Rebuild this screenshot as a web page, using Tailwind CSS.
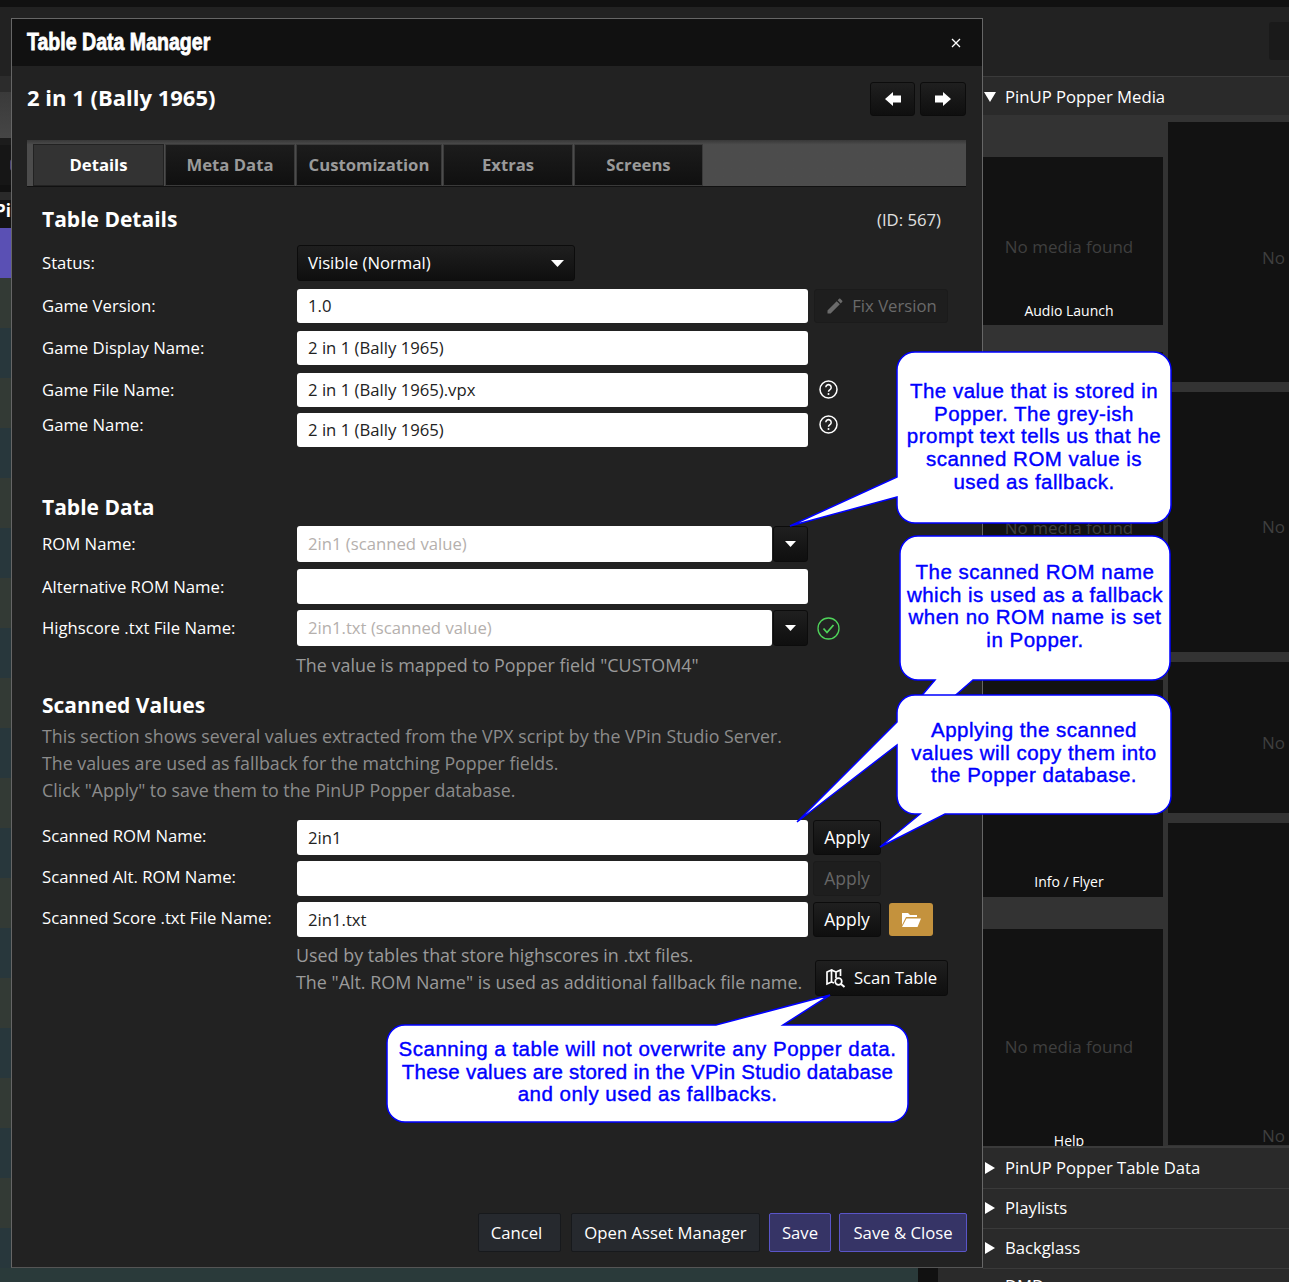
<!DOCTYPE html>
<html lang="en">
<head>
  <meta charset="UTF-8" />
  <title>Table Data Manager</title>
  <script src="https://cdn.jsdelivr.net/npm/@tailwindcss/browser@4"></script>
</head>
<body class="bg-[#222222]">
<div class="relative w-[1289px] h-[1282px] overflow-hidden bg-[#222222] text-white font-['Open_Sans',sans-serif] text-[16.7px]">

  <!-- app behind the dialog -->
  <div class="flex h-full">
    <!-- left: only a thin strip stays visible -->
    <div class="w-[983px] flex flex-col">
      <div class="h-[7px] shrink-0 bg-[#111111]"></div>
      <div class="h-[69px] shrink-0 bg-[#222222]"></div>
      <div class="h-[16px] shrink-0 bg-[#2c2c2c]"></div>
      <div class="h-[46px] shrink-0 bg-gradient-to-b from-[#3a3a3a] to-[#464646]"></div>
      <div class="h-[7px] shrink-0 bg-[#1c1c1c]"></div>
      <div class="h-[40px] shrink-0 bg-[#161616] relative">
        <div class="absolute left-[10px] top-[14px] w-[3px] h-[12px] rounded-l-full bg-[#4a4478]"></div>
      </div>
      <div class="h-[7px] shrink-0 bg-[#111111]"></div>
      <div class="h-[8px] shrink-0 bg-[#2a2a2a]"></div>
      <div class="h-[28px] shrink-0 bg-[#141414] font-bold text-[17px] leading-[22px] -ml-[5px] overflow-hidden">Pi</div>
      <div class="h-[50px] shrink-0 bg-[#5a50b4]"></div>
      <div class="flex-1 min-h-0 bg-[repeating-linear-gradient(#333a35_0,#333a35_50px,#28373c_50px,#28373c_100px)]"></div>
      <div class="h-[14px] shrink-0 flex">
        <div class="w-[918px] bg-[#2a3a3a]"></div>
        <div class="w-[20px] bg-[#111111]"></div>
        <div class="flex-1 bg-[#2a2a2a]"></div>
      </div>
    </div>

    <!-- right: media panel -->
    <div class="flex-1 flex flex-col min-w-0">
      <div class="h-[7px] shrink-0 bg-[#111111]"></div>
      <div class="h-[69px] shrink-0 bg-[#222222] flex justify-end pt-[15px]">
        <div class="w-[20px] h-[38px] bg-[#1a1a1a] rounded-l-[3px]"></div>
      </div>
      <div class="h-[39px] shrink-0 pt-[2px] bg-[#2a2a2a] border-t border-[#3a3a3a] flex items-center text-[16.7px]">
        <svg class="w-[12px] h-[10px] ml-[1px]" viewBox="0 0 12 10"><path d="M0 0H12L6 10Z" fill="#fff"/></svg>
        <span class="ml-[9px]">PinUP Popper Media</span>
      </div>
      <div class="h-[1031px] shrink-0 bg-[#333333] flex gap-[5px] overflow-hidden">
        <div class="w-[180px] flex flex-col shrink-0 pt-[42px]">
          <div class="h-[168px] shrink-0 bg-[#121212] pr-[8px] flex flex-col items-center">
            <span class="mt-[77px] text-[#3f3f3f] text-[17px]">No media found</span>
            <span class="mt-[41px] text-[14px] leading-[20px]">Audio Launch</span>
          </div>
          <div class="mt-[27px] h-[300px] shrink-0 bg-[#121212] pr-[8px] flex flex-col items-center">
            <span class="mt-[163px] text-[#3f3f3f] text-[17px]">No media found</span>
          </div>
          <div class="mt-[28px] h-[217px] shrink-0 bg-[#121212] pr-[8px] flex flex-col justify-end items-center pb-[5px]">
            <span class="text-[14px] leading-[20px]">Info / Flyer</span>
          </div>
          <div class="mt-[32px] h-[217px] shrink-0 bg-[#121212] pr-[8px] overflow-hidden flex flex-col items-center">
            <span class="mt-[105px] text-[#3f3f3f] text-[17px]">No media found</span>
            <span class="mt-[71px] text-[14px] leading-[20px]">Help</span>
          </div>
        </div>
        <div class="flex-1 flex flex-col gap-[10px] pt-[7px] text-[#3f3f3f] text-[17px] whitespace-nowrap">
          <div class="h-[260px] shrink-0 bg-[#121212] pl-[94px] pt-[123px]">No</div>
          <div class="h-[260px] shrink-0 bg-[#121212] pl-[94px] pt-[122px]">No</div>
          <div class="h-[151px] shrink-0 bg-[#121212] pl-[94px] pt-[68px]">No</div>
          <div class="h-[322px] shrink-0 bg-[#121212] pl-[94px] pt-[300px]">No</div>
        </div>
      </div>
      <div class="h-[42px] shrink-0 bg-[#2a2a2a] border-t-2 border-[#3a3a3a] flex items-center text-[16.7px]">
        <svg class="w-[10px] h-[12px] ml-[2px]" viewBox="0 0 10 12"><path d="M0 0L10 6L0 12Z" fill="#fff"/></svg>
        <span class="ml-[10px]">PinUP Popper Table Data</span>
      </div>
      <div class="h-[40px] shrink-0 pb-[2px] bg-[#2a2a2a] border-t border-[#3a3a3a] flex items-center text-[16.7px]">
        <svg class="w-[10px] h-[12px] ml-[2px]" viewBox="0 0 10 12"><path d="M0 0L10 6L0 12Z" fill="#fff"/></svg>
        <span class="ml-[10px]">Playlists</span>
      </div>
      <div class="h-[40px] shrink-0 pb-[2px] bg-[#2a2a2a] border-t border-[#3a3a3a] flex items-center text-[16.7px]">
        <svg class="w-[10px] h-[12px] ml-[2px]" viewBox="0 0 10 12"><path d="M0 0L10 6L0 12Z" fill="#fff"/></svg>
        <span class="ml-[10px]">Backglass</span>
      </div>
      <div class="flex-1 min-h-0 overflow-hidden bg-[#2a2a2a] border-t border-[#3a3a3a] pl-[22px] text-[16.7px] leading-[24px] pt-[5px]">DMD</div>
    </div>
  </div>

  <!-- dialog window -->
  <div class="absolute left-[11px] top-[18px] w-[972px] h-[1250px] flex flex-col bg-[#222222] border border-[#666666] border-b-[#555555]">
    <div class="h-[47px] shrink-0 bg-[#111111] flex items-center justify-between pl-[15px] pr-[21px]">
      <span class="inline-block origin-left scale-x-[0.85] whitespace-nowrap font-['Liberation_Sans',sans-serif] font-bold text-[23px] [-webkit-text-stroke:0.8px_white]">Table Data Manager</span>
      <svg class="w-[10px] h-[10px]" viewBox="0 0 10 10"><path d="M1 1L9 9M9 1L1 9" stroke="#fff" stroke-width="1.3"/></svg>
    </div>

    <div class="flex items-center justify-between pl-[15px] pr-[16px] mt-[16px] h-[34px]">
      <span class="text-[22px] font-bold leading-[30px] -mt-[4px]">2 in 1 (Bally 1965)</span>
      <div class="flex gap-[5px]">
        <div class="w-[45px] h-[34px] rounded-[3px] border border-[#0c0c0c] bg-gradient-to-b from-[#1f1f1f] to-[#0f0f0f] flex items-center justify-center">
          <svg class="w-[16px] h-[14px]" viewBox="0 0 16 14"><path d="M0 7L8 0V3.500H16V10.500H8V14Z" fill="#fff"/></svg>
        </div>
        <div class="w-[46px] h-[34px] rounded-[3px] border border-[#0c0c0c] bg-gradient-to-b from-[#1f1f1f] to-[#0f0f0f] flex items-center justify-center">
          <svg class="w-[16px] h-[14px]" viewBox="0 0 16 14"><path d="M16 7L8 0V3.500H0V10.500H8V14Z" fill="#fff"/></svg>
        </div>
      </div>
    </div>

    <!-- tabs -->
    <div class="mt-[24px] ml-[15px] w-[939px] h-[47px] shrink-0 flex items-end pl-[6px] bg-gradient-to-b from-[#383838] to-[#4c4c4c] to-[10%] border-b border-[#111111] text-[#9a9a9a] font-bold text-[16.7px]">
      <div class="w-[131px] h-[42px] flex items-center justify-center bg-[#333333] text-white border border-[#222222]">Details</div>
      <div class="w-[130px] h-[42px] ml-px flex items-center justify-center bg-gradient-to-b from-[#1c1c1c] to-[#101010] border border-[#3a3a3a]">Meta Data</div>
      <div class="w-[146px] h-[42px] ml-px flex items-center justify-center bg-gradient-to-b from-[#1c1c1c] to-[#101010] border border-[#3a3a3a]">Customization</div>
      <div class="w-[130px] h-[42px] ml-px flex items-center justify-center bg-gradient-to-b from-[#1c1c1c] to-[#101010] border border-[#3a3a3a]">Extras</div>
      <div class="w-[129px] h-[42px] ml-px flex items-center justify-center bg-gradient-to-b from-[#1c1c1c] to-[#101010] border border-[#3a3a3a]">Screens</div>
    </div>

    <!-- form -->
    <div class="pl-[30px] pr-[34px]">
      <div class="mt-[16px] h-[34px] flex items-center justify-between pr-[7px]">
        <span class="text-[21px] font-bold">Table Details</span>
        <span class="text-[#e0e0e0]">(ID: 567)</span>
      </div>
      <div class="mt-[8px] h-[36px] flex items-center">
        <span class="w-[255px]">Status:</span>
        <div class="w-[278px] h-[36px] rounded-[3px] border border-[#0c0c0c] bg-gradient-to-b from-[#1f1f1f] to-[#0f0f0f] flex items-center justify-between pl-[10px] pr-[10px]">
          <span>Visible (Normal)</span>
          <svg class="w-[13px] h-[7px]" viewBox="0 0 13 7"><path d="M0 0H13L6.500 7Z" fill="#fff"/></svg>
        </div>
      </div>
      <div class="mt-[8px] h-[34px] flex items-center">
        <span class="w-[255px]">Game Version:</span>
        <div class="w-[511px] h-[34px] rounded-[3px] bg-white text-[#222] flex items-center pl-[11px]">1.0</div>
        <div class="ml-[6px] w-[134px] h-[34px] rounded-[3px] border border-[#1b1b1b] bg-[#1e1e1e] text-[#6a6a6a] flex items-center justify-center gap-[7px]">
          <svg class="w-[20px] h-[20px]" viewBox="0 0 24 24"><path d="M3 17.250V21h3.750L17.810 9.940l-3.750-3.750L3 17.250zM20.710 7.040c.39-.39.39-1.020 0-1.410l-2.340-2.340c-.39-.39-1.020-.39-1.410 0l-1.830 1.830 3.750 3.750 1.830-1.830z" fill="#6a6a6a"/></svg>
          <span>Fix Version</span>
        </div>
      </div>
      <div class="mt-[8px] h-[34px] flex items-center">
        <span class="w-[255px]">Game Display Name:</span>
        <div class="w-[511px] h-[34px] rounded-[3px] bg-white text-[#222] flex items-center pl-[11px]">2 in 1 (Bally 1965)</div>
      </div>
      <div class="mt-[8px] h-[34px] flex items-center">
        <span class="w-[255px] -mt-[1px]">Game File Name:</span>
        <div class="w-[511px] h-[34px] rounded-[3px] bg-white text-[#222] flex items-center pl-[11px]">2 in 1 (Bally 1965).vpx</div>
        <svg class="ml-[11px] -mt-[2px] w-[19px] h-[19px]" viewBox="0 0 19 19"><circle cx="9.500" cy="9.500" r="8.500" fill="none" stroke="#fff" stroke-width="1.500"/><path d="M6.800 7.300a2.700 2.700 0 1 1 4.200 2.300c-1 .7-1.500 1.100-1.500 2.200" fill="none" stroke="#fff" stroke-width="1.500"/><circle cx="9.500" cy="14" r="1" fill="#fff"/></svg>
      </div>
      <div class="mt-[6px] h-[34px] flex items-center">
        <span class="w-[255px] -mt-[10px]">Game Name:</span>
        <div class="w-[511px] h-[34px] rounded-[3px] bg-white text-[#222] flex items-center pl-[11px]">2 in 1 (Bally 1965)</div>
        <svg class="ml-[11px] -mt-[12px] w-[19px] h-[19px]" viewBox="0 0 19 19"><circle cx="9.500" cy="9.500" r="8.500" fill="none" stroke="#fff" stroke-width="1.500"/><path d="M6.800 7.300a2.700 2.700 0 1 1 4.200 2.300c-1 .7-1.500 1.100-1.500 2.200" fill="none" stroke="#fff" stroke-width="1.500"/><circle cx="9.500" cy="14" r="1" fill="#fff"/></svg>
      </div>

      <div class="mt-[46px] h-[30px] flex items-center text-[21px] font-bold">Table Data</div>
      <div class="mt-[3px] h-[36px] flex items-center">
        <span class="w-[255px]">ROM Name:</span>
        <div class="w-[475px] h-[36px] rounded-[3px] bg-white text-[#b5b0ad] flex items-center pl-[11px]">2in1 (scanned value)</div>
        <div class="ml-px w-[35px] h-[36px] rounded-[3px] border border-[#0c0c0c] bg-gradient-to-b from-[#1f1f1f] to-[#0f0f0f] flex items-center justify-center">
          <svg class="w-[11px] h-[6px]" viewBox="0 0 11 6"><path d="M0 0H11L5.500 6Z" fill="#fff"/></svg>
        </div>
      </div>
      <div class="mt-[7px] h-[35px] flex items-center">
        <span class="w-[255px]">Alternative ROM Name:</span>
        <div class="w-[511px] h-[35px] rounded-[3px] bg-white"></div>
      </div>
      <div class="mt-[6px] h-[36px] flex items-center">
        <span class="w-[255px]">Highscore .txt File Name:</span>
        <div class="w-[475px] h-[36px] rounded-[3px] bg-white text-[#b5b0ad] flex items-center pl-[11px]">2in1.txt (scanned value)</div>
        <div class="ml-px w-[35px] h-[36px] rounded-[3px] border border-[#0c0c0c] bg-gradient-to-b from-[#1f1f1f] to-[#0f0f0f] flex items-center justify-center">
          <svg class="w-[11px] h-[6px]" viewBox="0 0 11 6"><path d="M0 0H11L5.500 6Z" fill="#fff"/></svg>
        </div>
        <svg class="ml-[9px] w-[23px] h-[23px]" viewBox="0 0 23 23"><circle cx="11.500" cy="11.500" r="10.500" fill="none" stroke="#4fd35a" stroke-width="1.300"/><path d="M6.500 11.500L10 15.500L16.500 8" fill="none" stroke="#4fd35a" stroke-width="1.800"/></svg>
      </div>
      <div class="mt-[6px] h-[27px] leading-[27px] pl-[254px] text-[#9a9a9a] text-[17.9px]">The value is mapped to Popper field "CUSTOM4"</div>

      <div class="mt-[12px] h-[30px] flex items-center text-[21px] font-bold">Scanned Values</div>
      <div class="mt-[2px] text-[#8c8c8c] leading-[27px] text-[17.8px]">
        <p>This section shows several values extracted from the VPX script by the VPin Studio Server.</p>
        <p>The values are used as fallback for the matching Popper fields.</p>
        <p>Click "Apply" to save them to the PinUP Popper database.</p>
      </div>
      <div class="mt-[16px] h-[35px] flex items-center">
        <span class="w-[255px] -mt-[4px]">Scanned ROM Name:</span>
        <div class="w-[511px] h-[35px] rounded-[3px] bg-white text-[#222] flex items-center pl-[11px]">2in1</div>
        <div class="ml-[5px] w-[68px] h-[35px] rounded-[3px] border border-[#0c0c0c] bg-gradient-to-b from-[#1f1f1f] to-[#0f0f0f] flex items-center justify-center text-[17.5px]">Apply</div>
      </div>
      <div class="mt-[6px] h-[35px] flex items-center">
        <span class="w-[255px] -mt-[4px]">Scanned Alt. ROM Name:</span>
        <div class="w-[511px] h-[35px] rounded-[3px] bg-white"></div>
        <div class="ml-[5px] w-[68px] h-[35px] rounded-[3px] border border-[#1b1b1b] bg-[#1e1e1e] text-[#666666] flex items-center justify-center text-[17.5px]">Apply</div>
      </div>
      <div class="mt-[6px] h-[35px] flex items-center">
        <span class="w-[255px] -mt-[4px]">Scanned Score .txt File Name:</span>
        <div class="w-[511px] h-[35px] rounded-[3px] bg-white text-[#222] flex items-center pl-[11px]">2in1.txt</div>
        <div class="ml-[5px] w-[68px] h-[35px] rounded-[3px] border border-[#0c0c0c] bg-gradient-to-b from-[#1f1f1f] to-[#0f0f0f] flex items-center justify-center text-[17.5px]">Apply</div>
        <div class="ml-[8px] w-[44px] h-[33px] rounded-[3px] bg-[#c4923d] flex items-center justify-center">
          <svg class="w-[20px] h-[16px]" viewBox="0 0 20 16"><path d="M1 1H7L9 3H16V5H5L1 13ZM5.500 6.500H20L16.500 15H1Z" fill="#fff"/></svg>
        </div>
      </div>
      <div class="mt-[5px] flex items-end">
        <div class="w-[518px] ml-[254px] shrink-0 text-[#9a9a9a] leading-[27px] whitespace-nowrap text-[17.9px]">
          <p>Used by tables that store highscores in .txt files.</p>
          <p>The "Alt. ROM Name" is used as additional fallback file name.</p>
        </div>
        <div class="ml-px w-[134px] h-[36px] rounded-[3px] border border-[#0c0c0c] bg-gradient-to-b from-[#1f1f1f] to-[#0f0f0f] flex items-center justify-center gap-[8px]">
          <svg class="w-[20px] h-[19px]" viewBox="0 0 20 19"><path d="M1 3L5.500 1V13L1 15ZM5.500 1L10 3V9M5.500 13L8 14M10 3L14.500 1V7" fill="none" stroke="#fff" stroke-width="1.700"/><circle cx="12.500" cy="12.500" r="3.300" fill="none" stroke="#fff" stroke-width="1.700"/><path d="M15 15L18.500 18" stroke="#fff" stroke-width="2"/></svg>
          <span>Scan Table</span>
        </div>
      </div>
    </div>

    <!-- footer buttons -->
    <div class="mt-auto mb-[15px] mr-[15px] flex justify-end">
      <div class="w-[83px] h-[39px] pr-[6px] flex items-center justify-center rounded-[2px] bg-[#26292e] border border-[#17191c]">Cancel</div>
      <div class="ml-[10px] w-[189px] h-[39px] flex items-center justify-center rounded-[2px] bg-[#26292e] border border-[#17191c]">Open Asset Manager</div>
      <div class="ml-[9px] w-[62px] h-[39px] flex items-center justify-center rounded-[2px] bg-[#363466] border border-[#5a55c8]">Save</div>
      <div class="ml-[8px] w-[128px] h-[39px] flex items-center justify-center rounded-[2px] bg-[#363466] border border-[#5a55c8]">Save &amp; Close</div>
    </div>
  </div>

  <!-- callouts -->
  <svg class="absolute left-0 top-0 w-[1289px] h-[1282px] pointer-events-none" viewBox="0 0 1289 1282">
    <g fill="#fff" stroke="#0000ff" stroke-width="1.500">
      <path d="M915 352H1153A18 18 0 0 1 1171 370V505A18 18 0 0 1 1153 523H915A18 18 0 0 1 897 505V497L790 526L897 477V370A18 18 0 0 1 915 352Z"/>
      <path d="M918 536H1152A18 18 0 0 1 1170 554V662A18 18 0 0 1 1152 680H973L950 700H918L935 680H918A18 18 0 0 1 900 662V554A18 18 0 0 1 918 536Z"/>
      <path d="M915 695H1153A18 18 0 0 1 1171 713V796A18 18 0 0 1 1153 814H945L880 847L920 814H915A18 18 0 0 1 897 796V745L797 822L897 722V713A18 18 0 0 1 915 695Z"/>
      <path d="M405 1025H716L830 995L783 1025H890A18 18 0 0 1 908 1043V1104A18 18 0 0 1 890 1122H405A18 18 0 0 1 387 1104V1043A18 18 0 0 1 405 1025Z"/>
    </g>
  </svg>
  <div class="absolute left-[897px] top-[380px] w-[274px] text-center text-[#0000ff] font-['Liberation_Sans',sans-serif] text-[20.500px] leading-[22.700px] tracking-[0.5px] [-webkit-text-stroke:0.4px_#0000ff]">The value that is stored in<br>Popper. The grey-ish<br>prompt text tells us that he<br>scanned ROM value is<br>used as fallback.</div>
  <div class="absolute left-[900px] top-[561px] w-[270px] text-center text-[#0000ff] font-['Liberation_Sans',sans-serif] text-[20.500px] leading-[22.700px] tracking-[0.5px] [-webkit-text-stroke:0.4px_#0000ff]">The scanned ROM name<br>which is used as a fallback<br>when no ROM name is set<br>in Popper.</div>
  <div class="absolute left-[897px] top-[719px] w-[274px] text-center text-[#0000ff] font-['Liberation_Sans',sans-serif] text-[20.500px] leading-[22.700px] tracking-[0.5px] [-webkit-text-stroke:0.4px_#0000ff]">Applying the scanned<br>values will copy them into<br>the Popper database.</div>
  <div class="absolute left-[387px] top-[1038px] w-[521px] text-center text-[#0000ff] font-['Liberation_Sans',sans-serif] text-[20.500px] leading-[22.700px] tracking-[0.5px] [-webkit-text-stroke:0.4px_#0000ff]">Scanning a table will not overwrite any Popper data.<br><span class="tracking-[0.25px]">These values are stored in the VPin Studio database</span><br>and only used as fallbacks.</div>
</div>
</body>
</html>
